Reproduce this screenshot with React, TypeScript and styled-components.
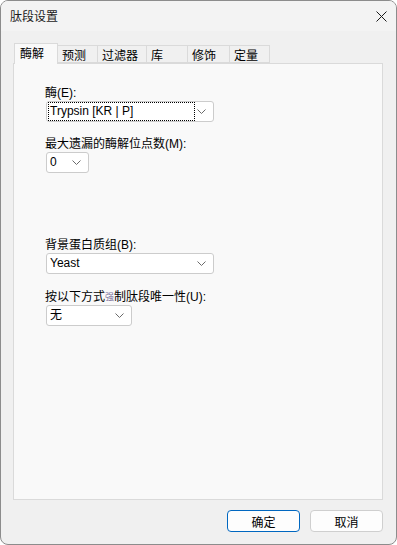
import React from "react";
import styled, { createGlobalStyle } from "styled-components";

const GlobalStyle = createGlobalStyle`
  html, body {
    margin: 0;
    padding: 0;
    background: #ffffff;
  }
  * {
    box-sizing: border-box;
  }
  body {
    font-family: "Liberation Sans", "Noto Sans CJK SC", sans-serif;
    font-size: 12px;
    color: #000000;
  }
`;

const Window = styled.div`
  width: 397px;
  height: 545px;
  border: 1px solid #8c8c8c;
  border-radius: 8px;
  background: #f0f0f0;
  display: flex;
  flex-direction: column;
  overflow: hidden;
`;

const TitleBar = styled.div`
  height: 30px;
  flex: none;
  display: flex;
  align-items: center;
  justify-content: space-between;
  padding: 0 9px 0 9px;
  background: #f3f3f3;
`;

const Title = styled.span`
  font-family: "Noto Sans CJK SC", sans-serif;
  font-size: 12px;
  color: #1a1a1a;
  line-height: 16px;
`;

const CloseButton = styled.div`
  width: 12px;
  height: 12px;
  display: flex;
  align-items: center;
  justify-content: center;
`;

const Body = styled.div`
  flex: 1;
  display: flex;
  flex-direction: column;
  padding: 12px 13px 0 12px;
`;

const TabStrip = styled.div`
  height: 20px;
  flex: none;
  display: flex;
  align-items: flex-end;
  padding-left: 1px;
  position: relative;
  z-index: 1;
`;

const Tab = styled.div<{ $active?: boolean; $w: number }>`
  width: ${(p) => p.$w}px;
  height: ${(p) => (p.$active ? 21 : 18)}px;
  margin-bottom: ${(p) => (p.$active ? -1 : 0)}px;
  border: 1px solid #dadada;
  border-bottom: ${(p) => (p.$active ? "none" : "1px solid #dadada")};
  margin-left: ${(p) => (p.$active ? 0 : -1)}px;
  background: ${(p) => (p.$active ? "#f9f9f9" : "#f0f0f0")};
  font-family: "Noto Sans CJK SC", sans-serif;
  font-size: 12px;
  line-height: 16px;
  padding-left: ${(p) => (p.$active ? 5 : 4)}px;
  padding-top: 1px;
  color: #000;
  &:first-child {
    margin-left: 0;
  }
`;

const Panel = styled.div`
  flex: 1;
  border: 1px solid #dadada;
  background: #f9f9f9;
  padding: 20px 0 0 31px;
  display: flex;
  flex-direction: column;
`;

const Field = styled.div<{ $gap: number }>`
  display: flex;
  flex-direction: column;
  margin-top: ${(p) => p.$gap}px;
`;

const Label = styled.div`
  font-family: "Noto Sans CJK SC", sans-serif;
  font-size: 12px;
  line-height: 16px;
  height: 17px;
  color: #000;
`;

const Mnemonic = styled.span`
  font-family: "Liberation Sans", sans-serif;
  font-size: 12px;
`;

const OddGlyph = styled.span`
  font-size: 9px;
  color: #7a6f9a;
  vertical-align: 1px;
`;

const Combo = styled.div<{ $w: number }>`
  width: ${(p) => p.$w}px;
  height: 21px;
  margin-left: 1px;
  border: 1px solid #cccccc;
  border-radius: 3px;
  background: #ffffff;
  display: flex;
  align-items: center;
  justify-content: space-between;
  padding: 0 7px 0 2px;
`;

const ComboText = styled.span<{ $focus?: boolean }>`
  font-family: "Liberation Sans", "Noto Sans CJK SC", sans-serif;
  font-size: 12px;
  line-height: 15px;
  padding: 1px 2px 1px 1px;
  outline: ${(p) => (p.$focus ? "1px dotted #000" : "none")};
  flex: ${(p) => (p.$focus ? "0 0 145px" : "none")};
  color: #000;
`;

const Footer = styled.div`
  height: 44px;
  flex: none;
  display: flex;
  justify-content: flex-end;
  align-items: flex-start;
  gap: 10px;
  padding: 10px 0 0 0;
`;

const Button = styled.div<{ $primary?: boolean }>`
  width: 73px;
  height: 22px;
  border: 1px solid ${(p) => (p.$primary ? "#0067c0" : "#cfcfcf")};
  border-radius: 4px;
  background: #fdfdfd;
  display: flex;
  align-items: center;
  justify-content: center;
  font-family: "Noto Sans CJK SC", sans-serif;
  font-size: 12px;
  color: #000;
`;

const Chevron = () => (
  <svg width="9" height="5" viewBox="0 0 9 5">
    <path d="M0.5 0.5 L4.5 4.5 L8.5 0.5" fill="none" stroke="#6a6a6a" strokeWidth="1" />
  </svg>
);

const tabs = [
  { name: "酶解", w: 44 },
  { name: "预测", w: 41 },
  { name: "过滤器", w: 50 },
  { name: "库", w: 42 },
  { name: "修饰", w: 43 },
  { name: "定量", w: 41 },
];

export default function App() {
  return (
    <>
      <GlobalStyle />
      <Window>
        <TitleBar>
          <Title>肽段设置</Title>
          <CloseButton>
            <svg width="11" height="11" viewBox="0 0 11 11">
              <path d="M0.5 0.5 L10.5 10.5 M10.5 0.5 L0.5 10.5" stroke="#1a1a1a" strokeWidth="1" />
            </svg>
          </CloseButton>
        </TitleBar>
        <Body>
          <TabStrip>
            {tabs.map((t, i) => (
              <Tab key={t.name} $active={i === 0} $w={t.w}>
                {t.name}
              </Tab>
            ))}
          </TabStrip>
          <Panel>
            <Field $gap={0}>
              <Label>
                酶<Mnemonic>(E):</Mnemonic>
              </Label>
              <Combo $w={168}>
                <ComboText $focus>Trypsin [KR | P]</ComboText>
                <Chevron />
              </Combo>
            </Field>
            <Field $gap={13}>
              <Label>
                最大遗漏的酶解位点数<Mnemonic>(M):</Mnemonic>
              </Label>
              <Combo $w={43}>
                <ComboText>0</ComboText>
                <Chevron />
              </Combo>
            </Field>
            <Field $gap={63}>
              <Label>
                背景蛋白质组<Mnemonic>(B):</Mnemonic>
              </Label>
              <Combo $w={168}>
                <ComboText>Yeast</ComboText>
                <Chevron />
              </Combo>
            </Field>
            <Field $gap={14}>
              <Label>
                按以下方式<OddGlyph>强</OddGlyph>制肽段唯一性<Mnemonic>(U):</Mnemonic>
              </Label>
              <Combo $w={86}>
                <ComboText>无</ComboText>
                <Chevron />
              </Combo>
            </Field>
          </Panel>
          <Footer>
            <Button $primary>确定</Button>
            <Button>取消</Button>
          </Footer>
        </Body>
      </Window>
    </>
  );
}
